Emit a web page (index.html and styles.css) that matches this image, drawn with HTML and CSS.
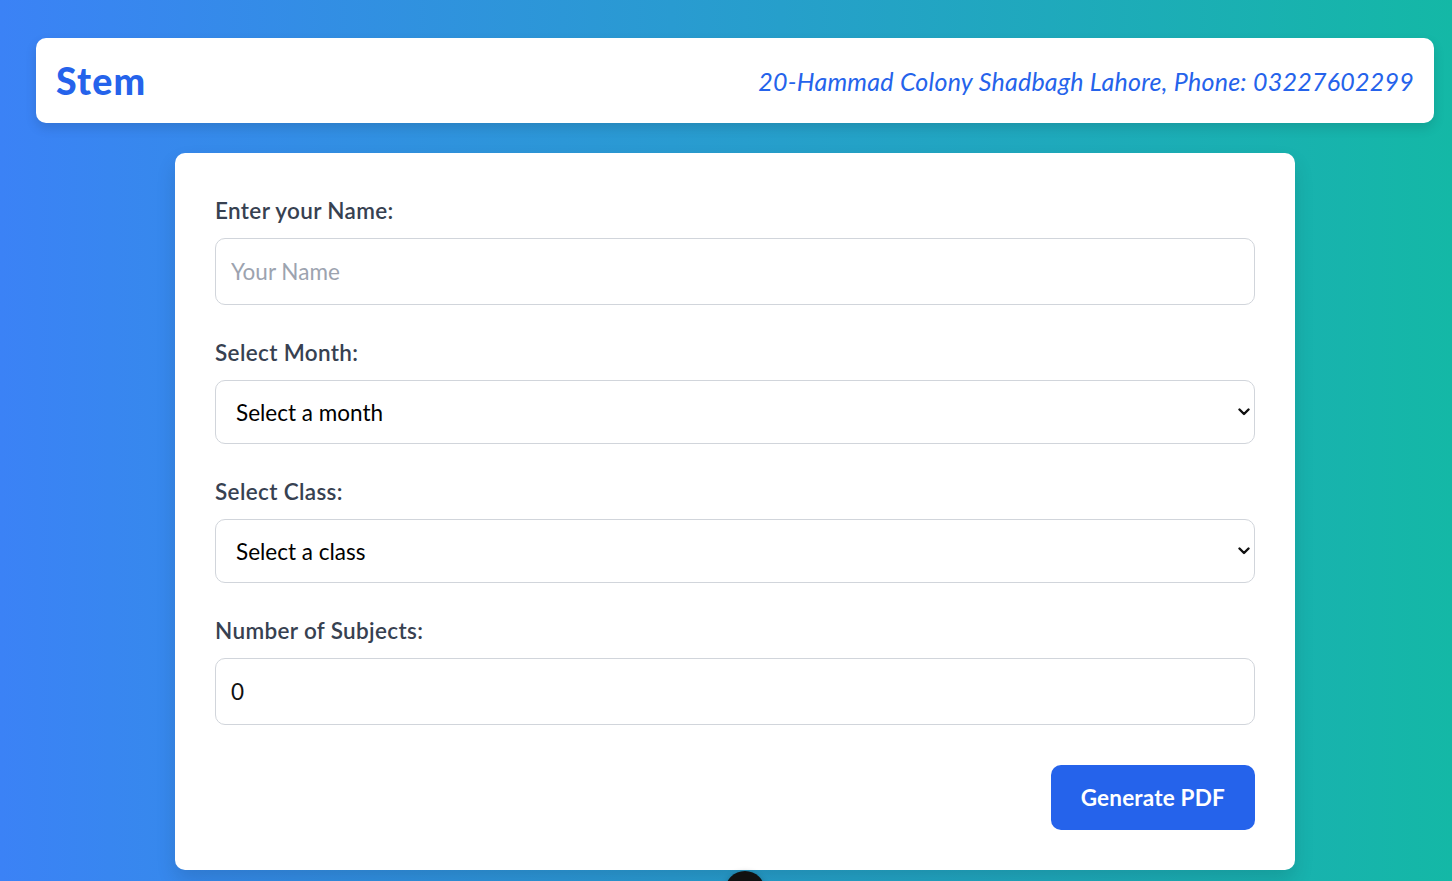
FILE: index.html
```html
<!DOCTYPE html>
<html lang="en">

<head>
    <meta charset="UTF-8">
    <meta name="viewport" content="width=device-width, initial-scale=1.0">
    <title>Stem - Result Card</title>

    <link rel="stylesheet" href="styles.css">
</head>

<body>

    <div class="page">
        <div class="header">
            <h1 class="logo">Stem</h1>
            <p class="address">20-Hammad Colony Shadbagh Lahore, Phone: 03227602299</p>
        </div>

        <form class="form-card" onsubmit="return false;">
            <div class="field">
                <label for="name">Enter your Name:</label>
                <input type="text" id="name" class="text-input" placeholder="Your Name">
            </div>

            <div class="field">
                <label for="month">Select Month:</label>
                <div class="select-wrap">
                    <select id="month" class="select-input">
                        <option value="">Select a month</option>
                        <option>January</option>
                        <option>February</option>
                        <option>March</option>
                        <option>April</option>
                        <option>May</option>
                        <option>June</option>
                        <option>July</option>
                        <option>August</option>
                        <option>September</option>
                        <option>October</option>
                        <option>November</option>
                        <option>December</option>
                    </select>
                    <svg class="chevron" width="12" height="8" viewBox="0 0 12 8">
                        <path d="M1.5 1.5 L6 6 L10.5 1.5" fill="none" stroke="#111" stroke-width="2.4" stroke-linecap="round" stroke-linejoin="round"/>
                    </svg>
                </div>
            </div>

            <div class="field">
                <label for="class">Select Class:</label>
                <div class="select-wrap">
                    <select id="class" class="select-input">
                        <option value="">Select a class</option>
                        <option>Class 9</option>
                        <option>Class 10</option>
                        <option>Class 11</option>
                        <option>Class 12</option>
                    </select>
                    <svg class="chevron" width="12" height="8" viewBox="0 0 12 8">
                        <path d="M1.5 1.5 L6 6 L10.5 1.5" fill="none" stroke="#111" stroke-width="2.4" stroke-linecap="round" stroke-linejoin="round"/>
                    </svg>
                </div>
            </div>

            <div class="field">
                <label for="subjects">Number of Subjects:</label>
                <input type="number" id="subjects" class="text-input" value="0" min="0">
            </div>

            <div class="actions">
                <button type="submit" class="btn">Generate PDF</button>
            </div>
        </form>

        <div class="fab-row">
            <div class="fab"></div>
        </div>
    </div>

</body>

</html>
```

FILE: styles.css
```css
body {
    font-family: "Lato", "Noto Sans", sans-serif;
    background: linear-gradient(to right, #3b82f6, #14b8a6);
    margin: 0;
    padding: 0;
    height: 100vh;
    overflow: hidden;
}

.page {
    padding: 38px 18px 0 36px;
}

.header {
    display: flex;
    justify-content: space-between;
    align-items: center;
    background-color: #fff;
    border-radius: 10px;
    padding: 20px;
    box-shadow: 0 5px 12px rgba(0, 0, 0, 0.12);
}

.logo {
    margin: 0;
    font-size: 37.5px;
    line-height: 45px;
    font-weight: 900;
    letter-spacing: 1.2px;
    color: #2563eb;
}

.address {
    margin: 0;
    font-size: 25px;
    font-style: italic;
    letter-spacing: 0.25px;
    color: #2563eb;
}

.form-card {
    max-width: 1120px;
    box-sizing: border-box;
    margin: 30px auto 0;
    padding: 40px;
    background-color: #fff;
    border-radius: 10px;
    box-shadow: 0 10px 20px rgba(0, 0, 0, 0.12);
}

.field {
    margin-bottom: 30px;
}

label {
    display: block;
    font-size: 22.5px;
    line-height: 35px;
    font-weight: 600;
    letter-spacing: 0.35px;
    color: #374151;
    margin-bottom: 10px;
}

.text-input,
.select-input {
    display: block;
    width: 100%;
    box-sizing: border-box;
    border: 1.25px solid #d1d5db;
    border-radius: 10px;
    background-color: #fff;
    font-family: inherit;
    font-size: 22.5px;
    color: #111;
    outline: none;
}

.text-input {
    height: 67px;
    padding: 0 15px;
}

.text-input::placeholder {
    color: #9ca3af;
}

.text-input::-webkit-inner-spin-button,
.text-input::-webkit-outer-spin-button {
    -webkit-appearance: none;
    margin: 0;
}

.select-wrap {
    position: relative;
}

.select-input {
    height: 64px;
    padding: 0 40px 0 20px;
    appearance: none;
    -webkit-appearance: none;
    color: #000;
}

.chevron {
    position: absolute;
    right: 5px;
    top: 28px;
    pointer-events: none;
}

.actions {
    display: flex;
    justify-content: flex-end;
    margin-top: 40px;
}

.btn {
    height: 65px;
    padding: 0 30px;
    border: none;
    border-radius: 10px;
    background-color: #2563eb;
    color: #fff;
    font-family: inherit;
    font-size: 22.5px;
    font-weight: 700;
    letter-spacing: 0.2px;
    cursor: pointer;
}

.btn:hover {
    background-color: #1d4ed8;
}

.fab-row {
    display: flex;
    justify-content: center;
    padding-left: 20px;
    margin-top: 1px;
}

.fab {
    width: 40px;
    height: 40px;
    border-radius: 50%;
    background-color: #111;
    box-shadow: 0 2px 6px rgba(0, 0, 0, 0.3);
}
```
